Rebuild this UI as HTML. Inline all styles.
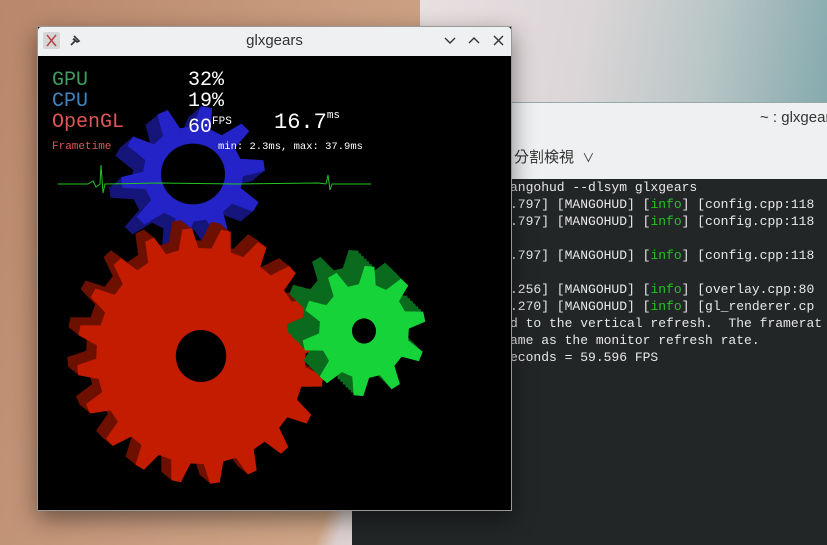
<!DOCTYPE html>
<html><head><meta charset="utf-8"><style>
html,body{margin:0;padding:0;width:827px;height:545px;overflow:hidden;position:relative;font-family:"Liberation Sans",sans-serif}
.bg{position:absolute;inset:0;background:linear-gradient(110deg,#b9876b 0%,#c99d80 35%,#cfa686 50%,#ddd0d0 52%,#e6dcdc 62%,#c9cfd0 80%,#8fb0b2 100%)}
.bgtop{position:absolute;left:420px;top:0;width:407px;height:102px;background:linear-gradient(100deg,#e8dfe0 0%,#dcd6d8 40%,#b9c6c6 70%,#86aaae 100%)}
.term{position:absolute;left:352px;top:102px;width:475px;height:443px;background:#232627;border-top:1px solid #9aa;overflow:hidden}
.thead{position:absolute;left:0;top:0;width:475px;height:76px;background:#eef0f1}
.ttitle{position:absolute;left:408px;top:6px;font-size:15px;color:#333;white-space:nowrap}
.tbar{position:absolute;left:162px;top:43px;font-size:15px;color:#333;font-family:"Liberation Sans","Noto Sans CJK TC",sans-serif;white-space:nowrap}
.tx{position:absolute;left:158px;top:76px;font:13px/17px "Liberation Mono",monospace;color:#e8e8e8;white-space:pre}
.g{color:#22c322}
.win{position:absolute;left:37px;top:26px;width:475px;height:485px;background:#000;box-shadow:0 8px 22px rgba(0,0,0,.45);border:1px solid #999;box-sizing:border-box}
.wt{position:absolute;left:0;top:0;width:100%;height:29px;background:#eef0f1;border-radius:3px 3px 0 0}
.wt .t{position:absolute;left:0;right:0;top:5px;text-align:center;font-size:15px;color:#333}
.hud{position:absolute;font-family:"Liberation Mono",monospace;white-space:pre}
</style></head><body>
<div class="bg"></div><div class="bgtop"></div>
<div class="term">
 <div class="thead"><div class="ttitle">~ : glxgear</div><div class="tbar">分割検視 &nbsp;<span style="font-size:12px">∨</span></div></div>
 <div class="tx">angohud --dlsym glxgears
.797] [MANGOHUD] [<span class="g">info</span>] [config.cpp:118
.797] [MANGOHUD] [<span class="g">info</span>] [config.cpp:118

.797] [MANGOHUD] [<span class="g">info</span>] [config.cpp:118

.256] [MANGOHUD] [<span class="g">info</span>] [overlay.cpp:80
.270] [MANGOHUD] [<span class="g">info</span>] [gl_renderer.cp
d to the vertical refresh.  The framerat
ame as the monitor refresh rate.
econds = 59.596 FPS</div>
</div>
<div class="win">
 <div class="wt"><div class="t">glxgears</div>
  <svg width="475" height="29" style="position:absolute;left:0;top:0">
   <rect x="5" y="5" width="17" height="17" rx="2" fill="#d6d6d6"/>
   <path d="M9 8 L18 19 M18 8 L9 19" stroke="#b44" stroke-width="1.5"/>
   <path d="M33 18 L37 14 M36 9 L41 14 L39 15 L36 12 L35 13" stroke="#333" stroke-width="1.6" fill="none"/>
   <path d="M407 11 L412 16 L417 11" stroke="#333" stroke-width="1.4" fill="none"/>
   <path d="M431 16 L436 11 L441 16" stroke="#333" stroke-width="1.4" fill="none"/>
   <path d="M456 9 L465 18 M465 9 L456 18" stroke="#333" stroke-width="1.4"/>
  </svg>
 </div>
 <svg id="gears" width="473" height="454" style="position:absolute;left:0;top:29px"></svg>
 <div class="hud" style="left:14px;top:43px;font-size:20px;line-height:21px"><span style="color:#3f9d5f">GPU</span>
<span style="color:#3e86c0">CPU</span>
<span style="color:#e05555">OpenGL</span></div>
 <div class="hud" style="left:150px;top:43px;font-size:20px;line-height:21px;color:#fff">32%
19%
60<span style="font-size:11px;vertical-align:8px">FPS</span></div>
 <div class="hud" style="left:236px;top:83px;font-size:22px;color:#fff">16.7<span style="font-size:11px;vertical-align:10px">ms</span></div>
 <div class="hud" style="left:14px;top:114px;font-size:11px;color:#e05555">Frametime</div>
 <div class="hud" style="left:180px;top:114px;font-size:10.5px;color:#fff">min: 2.3ms, max: 37.9ms</div>
</div>
<script>
function gear(cx,cy,n,rr,rt,sx,sy,rot){
 let p=[];for(let i=0;i<n;i++){let a=rot+i*2*Math.PI/n,d=2*Math.PI/n;
 [[0,rr],[d*0.2,rt],[d*0.45,rt],[d*0.6,rr]].forEach(([o,r])=>{p.push((cx+Math.cos(a+o)*r*sx).toFixed(1)+","+(cy+Math.sin(a+o)*r*sy).toFixed(1))})}
 return "M"+p.join("L")+"Z";}
let s="";
function full(cx,cy,n,rr,rt,sx,sy,rot,dx,dy,c1,c2,hr){
 for(let k=6;k>=1;k--)s+=`<path d="${gear(cx+dx*k/6,cy+dy*k/6,n,rr,rt,sx,sy,rot)}" fill="${c2}"/>`;
 s+=`<path d="${gear(cx,cy,n,rr,rt,sx,sy,rot)}" fill="${c1}"/>`;
 s+=`<ellipse cx="${cx}" cy="${cy}" rx="${hr*sx}" ry="${hr*sy}" fill="#000"/>`;
}
full(155,118,10,50,72,1,0.95,0.3,-12,10,"#2323c8","#15157a",32);
full(163,300,20,108,128,0.97,1,0.1,-10,-8,"#c41c00","#6e1000",26);
full(326,275,10,45,62,1,1.05,0.2,-16,-16,"#17d33a","#0a6a1d",12);
s+=`<polyline fill="none" stroke="#22c322" stroke-width="1" points="20,128 50,128 55,125 58,131 62,128 63,109 65,137 67,128 120,127 200,128 280,127 288,128 290,119 292,134 294,128 333,128"/>`;
document.getElementById("gears").innerHTML=s;
</script>
</body></html>
